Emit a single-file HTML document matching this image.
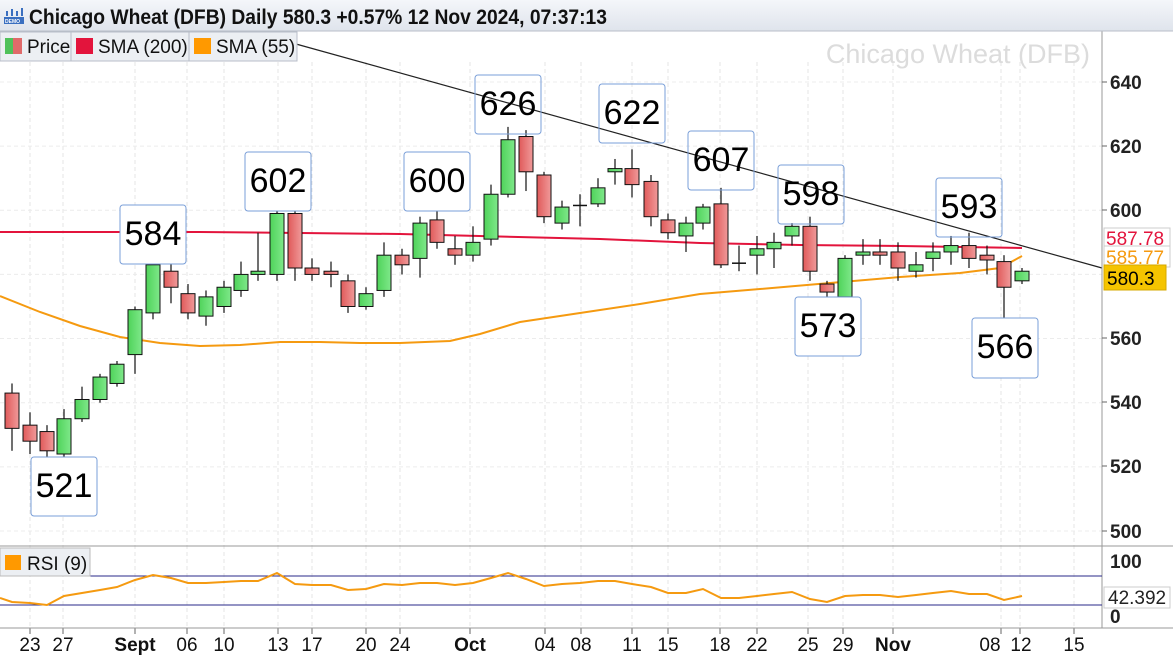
<!DOCTYPE html>
<html><head><meta charset="utf-8"><style>
html,body{margin:0;padding:0;background:#fff;width:1173px;height:660px;overflow:hidden;font-family:"Liberation Sans",Arial,sans-serif}
svg{display:block}
</style></head><body>
<svg id="s" width="1173" height="660" xmlns="http://www.w3.org/2000/svg" font-family="Liberation Sans, Arial, sans-serif">
<defs>
<linearGradient id="gg" x1="0" x2="1"><stop offset="0" stop-color="#4fd35a"/><stop offset="1" stop-color="#7fe88a"/></linearGradient>
<linearGradient id="rg" x1="0" x2="1"><stop offset="0" stop-color="#e05a5a"/><stop offset="1" stop-color="#f09a9a"/></linearGradient>
<linearGradient id="tb" x1="0" y1="0" x2="0" y2="1"><stop offset="0" stop-color="#f4f6fa"/><stop offset="1" stop-color="#dfe4ec"/></linearGradient>
</defs>
<rect x="0" y="0" width="1173" height="660" fill="#fff"/>
<g id="grid"></g>
<line x1="296" y1="44" x2="1102" y2="268" stroke="#222" stroke-width="1.2"/>
<g id="smas"></g>
<g id="candles"></g>
<text x="1090" y="63" font-size="27" fill="#dcdcdc" text-anchor="end">Chicago Wheat (DFB)</text>
<g font-size="34" fill="#000" text-anchor="middle">
<rect x="31" y="457" width="66" height="59" rx="3" fill="#fff" stroke="#7a9fd8"/><text x="64" y="497">521</text>
<rect x="120" y="205" width="66" height="59" rx="3" fill="#fff" stroke="#7a9fd8"/><text x="153" y="245">584</text>
<rect x="245" y="152" width="66" height="59" rx="3" fill="#fff" stroke="#7a9fd8"/><text x="278" y="192">602</text>
<rect x="404" y="152" width="66" height="59" rx="3" fill="#fff" stroke="#7a9fd8"/><text x="437" y="192">600</text>
<rect x="475" y="75" width="66" height="59" rx="3" fill="none" stroke="#7a9fd8"/><text x="508" y="115">626</text>
<rect x="599" y="84" width="66" height="59" rx="3" fill="none" stroke="#7a9fd8"/><text x="632" y="124">622</text>
<rect x="688" y="131" width="66" height="59" rx="3" fill="none" stroke="#7a9fd8"/><text x="721" y="171">607</text>
<rect x="778" y="165" width="66" height="59" rx="3" fill="none" stroke="#7a9fd8"/><text x="811" y="205">598</text>
<rect x="936" y="178" width="66" height="59" rx="3" fill="none" stroke="#7a9fd8"/><text x="969" y="218">593</text>
<rect x="795" y="297" width="66" height="59" rx="3" fill="#fff" stroke="#7a9fd8"/><text x="828" y="337">573</text>
<rect x="972" y="318" width="66" height="60" rx="3" fill="#fff" stroke="#7a9fd8"/><text x="1005" y="358">566</text>
</g>
<line x1="1102" y1="30" x2="1102" y2="628" stroke="#999"/>
<g font-size="19" font-weight="bold" fill="#222">
<text x="1110" y="89">640</text><text x="1110" y="153">620</text><text x="1110" y="217">600</text>
<text x="1110" y="345">560</text><text x="1110" y="409">540</text><text x="1110" y="473">520</text><text x="1110" y="538">500</text>
</g>
<g stroke="#666"><line x1="1102" y1="82" x2="1107" y2="82"/><line x1="1102" y1="146" x2="1107" y2="146"/><line x1="1102" y1="210" x2="1107" y2="210"/><line x1="1102" y1="338" x2="1107" y2="338"/><line x1="1102" y1="402" x2="1107" y2="402"/><line x1="1102" y1="466" x2="1107" y2="466"/><line x1="1102" y1="531" x2="1107" y2="531"/></g>
<rect x="1104" y="228" width="66" height="20" fill="#fff" stroke="#ccc"/><text x="1106" y="245" font-size="19" fill="#e3143c">587.78</text>
<rect x="1104" y="246" width="66" height="21" fill="#fff" stroke="#ccc"/><text x="1106" y="264" font-size="19" fill="#f59a10">585.77</text>
<rect x="1104" y="265" width="62" height="25" fill="#f5c400" stroke="#d6a800"/><text x="1107" y="285" font-size="19" fill="#000">580.3</text>
<line x1="0" y1="546" x2="1173" y2="546" stroke="#999"/>
<line x1="0" y1="628" x2="1173" y2="628" stroke="#999"/>
<line x1="0" y1="576" x2="1102" y2="576" stroke="#2a2a8a"/>
<line x1="0" y1="605" x2="1102" y2="605" stroke="#2a2a8a"/>
<polyline id="rsi" fill="none" stroke="#f59a10" stroke-width="2"/>
<g font-size="19" font-weight="bold" fill="#222"><text x="1110" y="568">100</text><text x="1110" y="623">0</text></g>
<rect x="1104" y="587" width="66" height="21" fill="#fff" stroke="#ccc"/><text x="1108" y="604" font-size="19" fill="#222">42.392</text>
<rect x="0" y="548" width="90" height="28" fill="#eceff3" stroke="#bbb"/>
<rect x="5" y="555" width="16" height="15" fill="#ff9900"/><text x="27" y="570" font-size="19" fill="#111">RSI (9)</text>
<g id="xax" font-size="19" fill="#111" text-anchor="middle">
<text x="30" y="651">23</text><text x="63" y="651">27</text><text x="135" y="651" font-weight="bold">Sept</text><text x="187" y="651">06</text><text x="224" y="651">10</text><text x="278" y="651">13</text><text x="312" y="651">17</text><text x="366" y="651">20</text><text x="400" y="651">24</text><text x="470" y="651" font-weight="bold">Oct</text><text x="545" y="651">04</text><text x="581" y="651">08</text><text x="632" y="651">11</text><text x="668" y="651">15</text><text x="720" y="651">18</text><text x="757" y="651">22</text><text x="808" y="651">25</text><text x="843" y="651">29</text><text x="893" y="651" font-weight="bold">Nov</text><text x="990" y="651">08</text><text x="1021" y="651">12</text><text x="1074" y="651">15</text>
</g>
<rect x="0" y="0" width="1173" height="31" fill="url(#tb)"/>
<line x1="0" y1="31" x2="1173" y2="31" stroke="#b8bec8"/>
<g fill="#3a6fc0"><rect x="4" y="17" width="20" height="7"/><rect x="6" y="11" width="2" height="5"/><rect x="11" y="9" width="2" height="7"/><rect x="16" y="11" width="2" height="5"/><rect x="21" y="8" width="2" height="8"/></g>
<text x="5" y="23" font-size="5" fill="#fff" font-weight="bold">DEMO</text>
<text x="29" y="24" font-size="21" font-weight="bold" fill="#111" textLength="578" lengthAdjust="spacingAndGlyphs">Chicago Wheat (DFB) Daily 580.3 +0.57% 12 Nov 2024, 07:37:13</text>
<rect x="0" y="32" width="297" height="29" fill="#eceff3" stroke="#b8bec8"/>
<line x1="71" y1="32" x2="71" y2="61" stroke="#b8bec8"/><line x1="189" y1="32" x2="189" y2="61" stroke="#b8bec8"/>
<rect x="5" y="38" width="8" height="16" fill="#4fc15a"/><rect x="13" y="38" width="9" height="16" fill="#e06a6a"/>
<text x="27" y="53" font-size="19" fill="#111">Price</text>
<rect x="76" y="38" width="17" height="16" fill="#e3143c"/><text x="98" y="53" font-size="19" fill="#111">SMA (200)</text>
<rect x="194" y="38" width="17" height="16" fill="#ff9900"/><text x="216" y="53" font-size="19" fill="#111">SMA (55)</text>
</svg>
<script>
var ns="http://www.w3.org/2000/svg";
function Y(p){return 82+(640-p)*3.207;}
function el(t,a,par){var e=document.createElementNS(ns,t);for(var k in a)e.setAttribute(k,a[k]);document.getElementById(par).appendChild(e);return e;}
var vx=[30,63,135,187,224,278,312,366,400,470,545,581,632,668,720,757,808,843,893,1001,1020,1074];
vx.forEach(function(x){el("line",{x1:x,y1:62,x2:x,y2:628,stroke:"#e4e4e4","stroke-dasharray":"4,3"},"grid");el("line",{x1:x,y1:628,x2:x,y2:634,stroke:"#666"},"grid");});
[640,620,600,580,560,540,520,500].forEach(function(p){el("line",{x1:0,y1:Y(p),x2:1102,y2:Y(p),stroke:"#ececec","stroke-dasharray":"4,3"},"grid");});
var c=[[12,543,532,546,525],[30,533,528,537,524],[47,531,525,533,521],[64,524,535,538,522],[82,535,541,545,534],[100,541,548,549,540],[117,546,552,553,545],[135,555,569,570,549],[153,568,583,585,566],[171,581,576,584,571],[188,574,568,577,566],[206,567,573,575,564],[224,570,576,578,568],[241,575,580,584,573],[258,580,581,593,578],[277,580,599,602,578],[295,599,582,600,578],[312,582,580,585,578],[331,581,580,584,576],[348,578,570,580,568],[366,570,574,576,569],[384,575,586,590,573],[402,586,583,588,580],[420,585,596,598,579],[437,597,590,600,588],[455,588,586,592,583],[473,586,590,595,584],[491,591,605,608,589],[508,605,622,626,604],[526,623,612,625,606],[544,611,598,612,596],[562,596,601,603,594],[580,601.5,601.5,605,595],[598,602,607,610,601],[615,612,613,616,608],[632,613,608,619,604],[651,609,598,611,595],[668,597,593,599,591],[686,592,596,598,587],[703,596,601,602,594],[721,602,583,607,582],[739,583.5,583.5,589,581],[757,586,588,592,580],[774,588,590,593,582],[792,592,595,596,589],[810,595,581,598,578],[827,577,574.5,578,573],[845,573,585,586,572],[863,586,587,591,583],[880,587,586,591,583],[898,587,582,590,578],[916,581,583,587,579],[933,585,587,590,581],[951,587,589,592,583],[969,589,585,593,582],[987,586,584.5,589,580],[1004,584,576,586,566],[1022,578,581,582,577]];
c.forEach(function(d){var x=d[0],o=d[1],cl=d[2],up=cl>=o;
el("line",{x1:x,y1:Y(d[3]),x2:x,y2:Y(d[4]),stroke:"#111","stroke-width":1.2},"candles");
var t=Math.min(Y(o),Y(cl)),h=Math.max(1.5,Math.abs(Y(o)-Y(cl)));
if(Math.abs(o-cl)<0.1){el("line",{x1:x-7,y1:t,x2:x+7,y2:t,stroke:"#111","stroke-width":1.5},"candles");}
else el("rect",{x:x-7,y:t,width:14,height:h,fill:up?"url(#gg)":"url(#rg)",stroke:"#111","stroke-width":1},"candles");});
el("polyline",{points:"0,232 200,232 400,234 600,239 700,243 800,245 900,246 1022,248",fill:"none",stroke:"#e3143c","stroke-width":2},"smas");
el("polyline",{points:"0,296 40,312 80,326 120,337 160,343 200,346 240,345 280,342 320,342 360,343 400,343 450,341 480,334 520,322 580,313 640,304 700,294 760,289 830,283 900,277 960,273 1000,268 1022,256",fill:"none",stroke:"#f59a10","stroke-width":2},"smas");
document.getElementById("rsi").setAttribute("points","0,598 12,602 30,603 47,605 64,596 82,593 100,590 117,587 135,580 153,575 171,578 188,583 206,583 224,582 241,581 258,581 277,573 295,584 312,585 331,585 348,590 366,589 384,584 402,585 420,583 437,583 455,585 473,583 491,578 508,573 526,579 544,586 562,584 580,583 598,581 615,581 632,584 651,587 668,593 686,593 703,589 721,598 739,598 757,596 774,594 792,592 810,599 827,602 845,596 863,595 880,595 898,597 916,595 933,593 951,591 969,594 987,594 1004,600 1022,596");
</script>
</body></html>
